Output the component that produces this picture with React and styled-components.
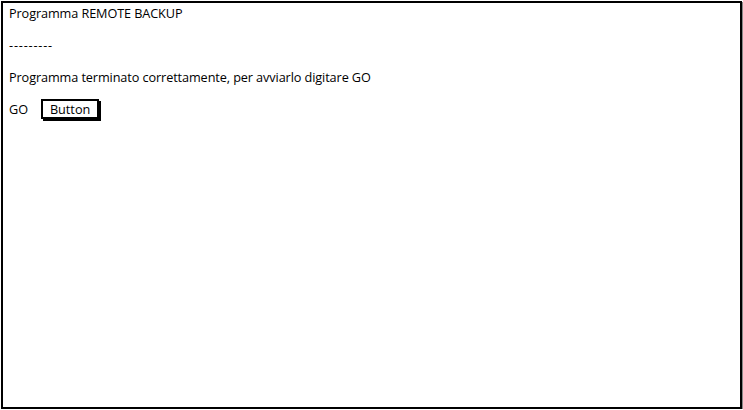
import React from 'react';
import styled, { createGlobalStyle } from 'styled-components';

const GlobalStyle = createGlobalStyle`
    html, body {
        margin: 0;
        padding: 0;
        background: #fff;
    }
    body {
        font-family: "Open Sans", "Liberation Sans", sans-serif;
        color: #000;
    }
`;

function App() {
    return (
        <>
            <GlobalStyle />
            <Frame>
                <Line>Programma REMOTE BACKUP</Line>
                <Line $spacing={0.8}>---------</Line>
                <Line>Programma terminato correttamente, per avviarlo digitare GO</Line>
                <Row>
                    <Label>GO</Label>
                    <Button>Button</Button>
                </Row>
            </Frame>
        </>
    );
}

export default App;

const Frame = styled.div`
    box-sizing: border-box;
    width: 741px;
    height: 408px;
    margin: 1px 0 0 1px;
    border: 2px solid #000;
    box-shadow: 1px 1px 0 #888;
    background: #fff;
    padding: 0 0 0 6px;
    display: flex;
    flex-direction: column;
    gap: 12px;
`;

const Line = styled.div`
    font-size: 12.7px;
    line-height: 20px;
    height: 20px;
    letter-spacing: ${(p) => (p.$spacing ?? -0.1)}px;
`;

const Row = styled.div`
    display: flex;
    align-items: center;
    gap: 13px;
`;

const Label = styled.span`
    font-size: 12.7px;
    line-height: 20px;
`;

const Button = styled.button`
    box-sizing: border-box;
    width: 58px;
    height: 20px;
    padding: 0;
    border: 2px solid #000;
    border-radius: 0;
    background: #fff;
    box-shadow: 2px 2px 0 #000;
    font-family: "Open Sans", "Liberation Sans", sans-serif;
    font-size: 12.7px;
    line-height: 16px;
    color: #000;
`;
